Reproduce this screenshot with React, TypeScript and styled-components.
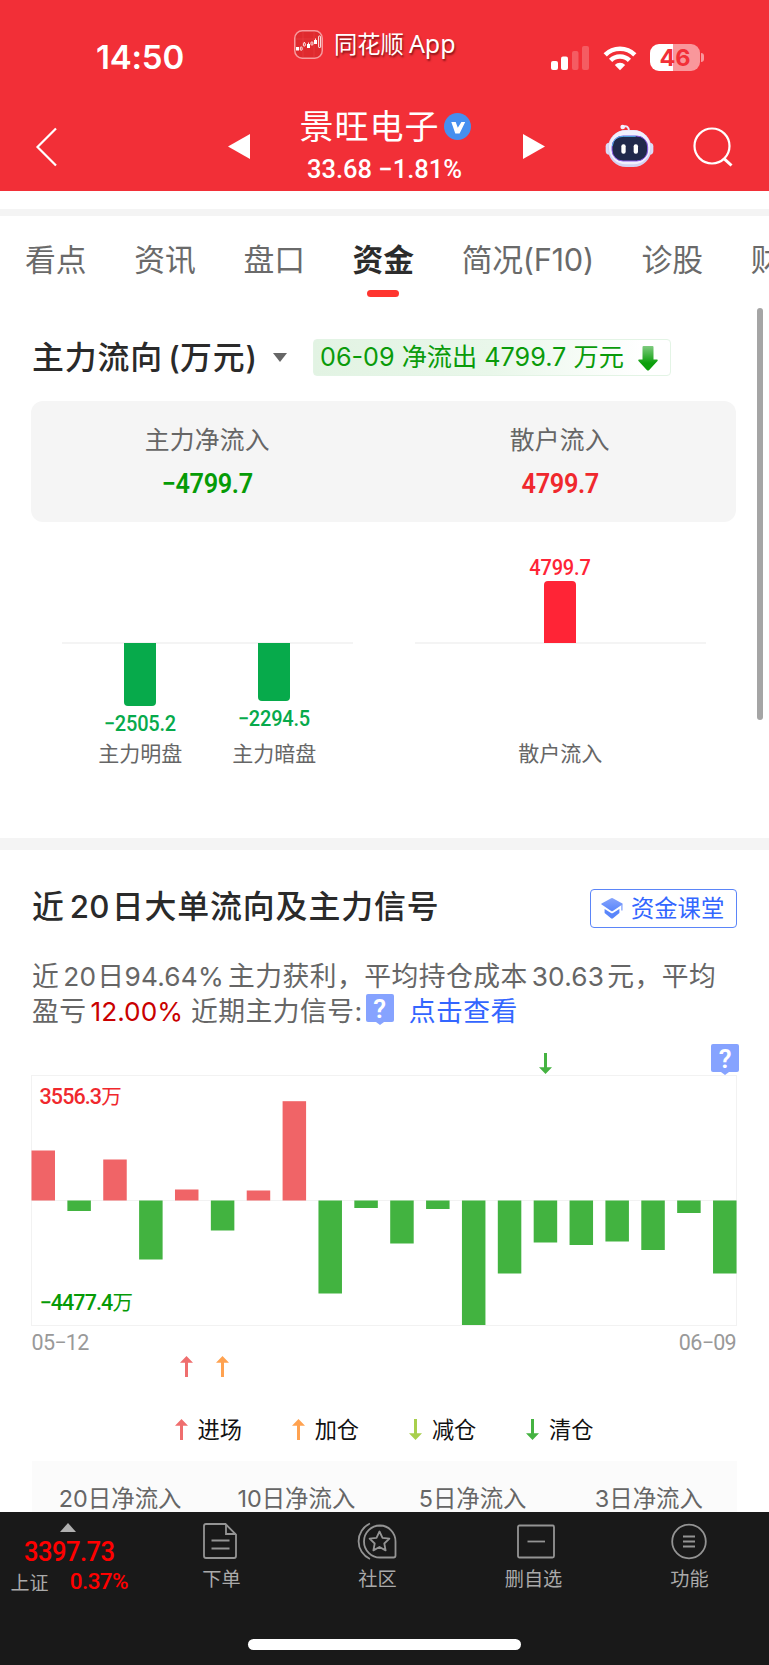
import React, { useState } from "react";
import styled, { createGlobalStyle } from "styled-components";

const sans = `Inter, "Noto Sans CJK SC", sans-serif`;
const din = `Roboto, "Noto Sans CJK SC", sans-serif`;

const GlobalStyle = createGlobalStyle`
  * {
    box-sizing: border-box;
  }
  body {
    margin: 0;
    background: #fff;
    font-family: ${sans};
    color: #333;
  }
  svg {
    display: block;
    flex: none;
  }
`;

const Screen = styled.div`
  position: relative;
  width: 769px;
  height: 1665px;
  display: flex;
  flex-direction: column;
  overflow: hidden;
  white-space: nowrap;
`;

/* ---------- header ---------- */

const Header = styled.header`
  height: 191px;
  flex: none;
  background: #f22f37;
  color: #fff;
`;

const StatusBar = styled.div`
  height: 100px;
  display: grid;
  grid-template-columns: 294px 257px 1fr;
`;

const Clock = styled.div`
  padding: 37px 0 0 96px;
  font-size: 33px;
  line-height: 40px;
  font-weight: 600;
  letter-spacing: -0.2px;
`;

const AppMark = styled.div`
  display: flex;
  align-items: center;
  height: 30px;
  margin-top: 29px;
  font-size: 23.3px;
  line-height: 28px;
  font-family: "Noto Sans", "Noto Sans CJK SC", sans-serif;
  text-shadow: 1px 2px 2px rgba(60, 0, 0, 0.6);

  svg {
    margin-right: 11px;
  }
  span {
    margin-left: 5px;
    font-size: 25px;
  }
`;

const AppName = styled.div`
  height: 30px;
`;

const StatusIcons = styled.div`
  display: flex;
  align-items: center;
  height: 27px;
  margin-top: 44px;
`;

const Battery = styled.div`
  width: 50px;
  height: 27px;
  margin-left: 13px;
  border-radius: 9px;
  background: linear-gradient(to right, #fff 23px, #f9979b 23px);
  color: #f22f37;
  font-size: 23.5px;
  font-weight: 700;
  line-height: 27px;
  text-align: center;
`;

const BatteryCap = styled.div`
  width: 3px;
  height: 9px;
  margin-left: 1px;
  border-radius: 0 5px 5px 0;
  background: #f9979b;
`;

const NavBar = styled.div`
  height: 91px;
  display: flex;
`;

const NavSlot = styled.div<{ left: number; top: number }>`
  margin-left: ${p => p.left}px;
  margin-top: ${p => p.top}px;
`;

const Stock = styled.div`
  width: 273px;
  display: flex;
  flex-direction: column;
  align-items: center;
`;

const StockName = styled.div`
  display: flex;
  align-items: center;
  height: 40px;
  margin-top: 7px;
  padding-right: 3px;
  font-size: 34px;
  line-height: 40px;
  letter-spacing: 1px;

  svg {
    margin: 0 0 1px 4px;
  }
`;

const StockPrice = styled.div`
  height: 30px;
  margin-top: 7px;
  padding-right: 4px;
  font-family: ${din};
  font-weight: 500;
  font-size: 25.5px;
  line-height: 30px;
`;

/* ---------- content ---------- */

const Content = styled.main`
  height: 1321px;
  flex: none;
  padding-top: 18px;
  overflow: hidden;
`;

const Divider = styled.div<{ size: number }>`
  height: ${p => p.size}px;
  background: #f4f4f4;
`;

const Tabs = styled.nav`
  display: flex;
  gap: 47.6px;
  height: 81px;
  padding: 26px 0 0 25px;
  overflow: hidden;
`;

const Tab = styled.div<{ active?: boolean; tight?: boolean }>`
  flex: none;
  display: flex;
  flex-direction: column;
  align-items: center;
  font-size: 30.8px;
  line-height: 36px;
  letter-spacing: ${p => (p.tight ? "-0.3px" : "0")};
  color: ${p => (p.active ? "#2c2c2c" : "#6a6a6a")};
  font-weight: ${p => (p.active ? 700 : 400)};

  &::after {
    content: "";
    width: 32px;
    height: 7px;
    margin-top: 12px;
    border-radius: 3.5px;
    background: ${p => (p.active ? "#ff352f" : "transparent")};
  }
`;

const FlowHead = styled.div`
  display: grid;
  grid-template-columns: 241px 40px 358px;
  align-items: center;
  height: 37px;
  margin: 42px 0 0 32px;
`;

const Title = styled.h2`
  margin: 0;
  font-size: 31.9px;
  line-height: 36px;
  font-weight: 500;
  letter-spacing: 0.9px;
  color: #2a2a2a;
`;

const Caret = styled.div`
  width: 0;
  border: solid transparent;
  border-width: 9px 7.5px 0;
  border-top-color: #666;
`;

const FlowTag = styled.div`
  display: flex;
  justify-content: space-between;
  height: 37px;
  padding: 0 12px 0 6px;
  border: 1px solid #e3f4e5;
  border-radius: 4px;
  background: linear-gradient(to right, #e2f3e3, #e9f7ea 50%, #fff 92%);
  color: #0a9b0a;
  font-size: 25.2px;
  line-height: 35px;

  svg {
    margin-top: 6px;
  }
`;

const Summary = styled.div`
  display: grid;
  grid-template-columns: 1fr 1fr;
  height: 121px;
  margin: 25px 33px 0 31px;
  padding-top: 23px;
  border-radius: 12px;
  background: #f5f5f5;
  text-align: center;
`;

const SummaryLabel = styled.div`
  font-size: 24.8px;
  line-height: 32px;
  letter-spacing: 0.2px;
  color: #666;
`;

const SummaryValue = styled.div<{ up: boolean }>`
  margin-top: 12px;
  font-family: ${din};
  font-size: 27.5px;
  line-height: 32px;
  font-weight: 600;
  letter-spacing: -0.4px;
  transform: scaleX(0.92);
  color: ${p => (p.up ? "#f0282d" : "#069b06")};
`;

const FlowChart = styled.div`
  display: flex;
  gap: 62.5px;
  height: 316px;
  padding-left: 62px;
`;

const FlowGroup = styled.div`
  display: flex;
  justify-content: center;
  width: 290.5px;
  background: linear-gradient(#f4f4f4, #f4f4f4) 0 120px / 100% 2px no-repeat;
`;

const FlowColumn = styled.div`
  width: 134px;
`;

const FlowHalf = styled.div<{ size: number; up?: boolean }>`
  height: ${p => p.size}px;
  display: flex;
  flex-direction: column;
  align-items: center;
  justify-content: ${p => (p.up ? "flex-end" : "flex-start")};
`;

const FlowBar = styled.div<{ up?: boolean }>`
  width: 32px;
  border-radius: ${p => (p.up ? "4px 4px 0 0" : "0 0 4px 4px")};
  background: ${p => (p.up ? "#ff2436" : "#07aa4b")};
`;

const FlowValue = styled.div<{ up?: boolean }>`
  font-family: ${din};
  font-size: 21.5px;
  line-height: 24px;
  font-weight: 500;
  letter-spacing: -0.2px;
  transform: scaleX(0.93);
  margin: ${p => (p.up ? "0 0 1px" : "6px 0 0")};
  color: ${p => (p.up ? "#ff2436" : "#07aa4b")};
`;

const FlowLabel = styled.div`
  font-size: 21px;
  line-height: 22px;
  text-align: center;
  color: #666;
`;

const SectionHead = styled.div`
  display: flex;
  justify-content: space-between;
  height: 39px;
  margin: 39px 32px 0;
`;

const ClassButton = styled.button`
  display: flex;
  width: 147px;
  height: 39px;
  padding: 0 0 0 10px;
  border: 1.5px solid #5b85f8;
  border-radius: 4px;
  background: #fff;
  color: #3366ff;
  font-family: ${sans};
  font-size: 23.3px;
  line-height: 37px;

  svg {
    margin: 8px 8px 0 0;
  }
`;

const Brief = styled.div`
  margin: 31px 0 0 32px;
  color: #666;
`;

const BriefLine = styled.div`
  display: flex;
  height: 35px;
  font-size: 26.8px;
  line-height: 35px;
  letter-spacing: 0.45px;
`;

const Num = styled.span<{ before?: number; after?: number; tone?: string }>`
  margin-left: ${p => p.before || 0}px;
  margin-right: ${p => p.after || 0}px;
  font-size: 0.98em;
  letter-spacing: ${p => (p.tone ? "0" : "0.2px")};
  color: ${p => p.tone || "inherit"};
`;

const Link = styled.a`
  margin-left: 15px;
  color: #3366ff;
`;

const MarkRow = styled.div<{ size: number; top: number; end?: boolean }>`
  display: grid;
  grid-template-columns: repeat(20, 1fr);
  justify-items: center;
  align-items: ${p => (p.end ? "end" : "start")};
  height: ${p => p.size}px;
  margin: ${p => p.top}px 26px 0 25px;
`;

const Mark = styled.div<{ day: number; top?: boolean }>`
  grid-column: ${p => p.day};
  align-self: ${p => (p.top ? "start" : "auto")};
`;

const Plot = styled.div`
  position: relative;
  width: 706px;
  height: 251px;
  margin: 1px 0 0 31px;
`;

const PlotLabel = styled.div<{ up?: boolean }>`
  position: absolute;
  left: 8.5px;
  ${p => (p.up ? "top: 10px" : "bottom: 11px")};
  font-family: ${din};
  font-size: 21.5px;
  line-height: 24px;
  font-weight: 500;
  letter-spacing: -0.9px;
  color: ${p => (p.up ? "#f0282d" : "#069b06")};

  span {
    font-weight: 400;
    font-size: 20.5px;
  }
`;

const Dates = styled.div`
  display: flex;
  justify-content: space-between;
  margin: 4px 33px 0 31.5px;
  font-family: ${din};
  font-size: 21.5px;
  line-height: 25px;
  letter-spacing: -0.7px;
  color: #999;
`;

const Legend = styled.div`
  display: grid;
  grid-template-columns: repeat(4, 117.2px);
  height: 21px;
  margin: 42px 0 0 174.5px;
`;

const LegendItem = styled.div`
  display: flex;
  align-items: center;
  gap: 10px;
  font-size: 22.2px;
  line-height: 21px;
  color: #111;
`;

const Periods = styled.div`
  display: grid;
  grid-template-columns: repeat(4, 1fr);
  height: 51px;
  margin: 21px 32px 0;
  padding-top: 22px;
  background: #fbfbfb;
  color: #666;
  font-size: 23.4px;
  line-height: 32px;
  text-align: center;
`;

const ScrollThumb = styled.div`
  position: absolute;
  top: 308px;
  right: 6px;
  width: 6px;
  height: 412px;
  border-radius: 3px;
  background: #a5a5a5;
`;

/* ---------- bottom bar ---------- */

const Footer = styled.footer`
  height: 153px;
  flex: none;
  display: flex;
  flex-direction: column;
  align-items: center;
  background: #191919;
  color: #aaa;
`;

const Actions = styled.div`
  display: flex;
  width: 100%;
  height: 127px;
`;

const Market = styled.div`
  width: 143.5px;
  padding-top: 11px;
  font-family: ${din};
  font-weight: 500;
  color: #ff0000;
`;

const MarketCaret = styled.div`
  width: 0;
  margin-left: 60px;
  border: solid transparent;
  border-width: 0 8.5px 9px;
  border-bottom-color: #b0b0b0;
`;

const MarketIndex = styled.div`
  margin: 4px 0 0 24px;
  font-size: 27.5px;
  line-height: 32px;
  letter-spacing: -0.6px;
  transform: scaleX(0.93);
  transform-origin: left;
`;

const MarketRow = styled.div`
  display: flex;
  justify-content: space-between;
  margin: 0 15.5px 0 10.5px;
  font-size: 22.5px;
  line-height: 26px;
  letter-spacing: -0.6px;

  span {
    color: #aaa;
    font-size: 19px;
    font-weight: 400;
    line-height: 31px;
    letter-spacing: 0;
  }
`;

const Action = styled.div<{ nudge: number }>`
  width: 156px;
  display: flex;
  flex-direction: column;
  align-items: center;
  padding-top: 10px;
  font-size: 19.2px;
  line-height: 24px;

  svg {
    margin-bottom: 7px;
    margin-left: ${p => p.nudge}px;
  }
`;

const HomeIndicator = styled.div`
  width: 273px;
  height: 11px;
  border-radius: 6px;
  background: #fff;
`;

/* ---------- icons ---------- */

const AppIcon = () => (
  <svg width="29" height="29" viewBox="0 0 29 29">
    <rect x="0.75" y="0.75" width="27.5" height="27.5" rx="7.5" fill="#df2a2e" stroke="#f79a9d" strokeWidth="1.5" />
    <path d="M2 9h25M9 2v25M20 2v25" stroke="#ea4448" strokeWidth="0.5" />
    <g fill="#fff">
      <rect x="2" y="17" width="3" height="3.5" />
      <rect x="13" y="14" width="3" height="4" />
      <rect x="20" y="10" width="3" height="4" />
    </g>
    <g fill="none" stroke="#fff" strokeWidth="0.9">
      <rect x="6.3" y="17" width="1.8" height="3.2" rx="0.6" />
      <path d="M10.3 12v1M14.5 12.5v1.5M21.5 8.5v1.5" />
      <rect x="9.4" y="13" width="1.9" height="3" rx="0.6" />
      <rect x="17" y="12" width="1.9" height="3" rx="0.6" />
      <rect x="24.6" y="6" width="2" height="11.5" rx="0.6" />
    </g>
  </svg>
);

const Signal = () => (
  <svg width="38" height="24" viewBox="0 0 38 24" fill="#fff">
    <rect x="0" y="15" width="7" height="9" rx="2" />
    <rect x="10" y="10.5" width="7" height="13.5" rx="2" />
    <rect x="21" y="5" width="6.5" height="19" rx="2" opacity="0.22" />
    <rect x="31" y="0" width="7" height="24" rx="2" opacity="0.22" />
  </svg>
);

const WifiIcon = styled.svg`
  margin-left: 14px;
`;

const Wifi = () => (
  <WifiIcon width="34" height="26" viewBox="0 0 34 26">
    <g fill="none" stroke="#fff" strokeWidth="4.6">
      <path d="M2.2 9.8a21 21 0 0 1 29.6 0" />
      <path d="M7.6 15.4a13.3 13.3 0 0 1 18.8 0" />
    </g>
    <path d="M17 25.2l-5.2-5.3a7.4 7.4 0 0 1 10.4 0z" fill="#fff" />
  </WifiIcon>
);

const Verified = () => (
  <svg width="27" height="27" viewBox="0 0 27 27">
    <circle cx="13.5" cy="13.5" r="13.5" fill="#468fef" />
    <path d="M7.3 9h4.4l2.1 5.7L17.4 9h3.8l-5.6 11.5h-4.3z" fill="#fff" />
  </svg>
);

const Robot = () => (
  <svg width="48.7" height="44" viewBox="194 284 146 132">
    <path d="M248 292c10-4 18 0 18 14" fill="none" stroke="#eceafc" strokeWidth="6" strokeLinecap="round" />
    <circle cx="247" cy="293" r="7" fill="#f4f2ff" />
    <rect x="196" y="340" width="24" height="36" rx="11" fill="#dcdcf6" />
    <rect x="315" y="340" width="24" height="36" rx="11" fill="#dcdcf6" />
    <rect x="203" y="302" width="130" height="111" rx="54" fill="#d3d3f2" />
    <rect x="206" y="303" width="124" height="102" rx="50" fill="#f1f0fd" />
    <rect x="215" y="320" width="107" height="75" rx="33" fill="#20294b" stroke="#8a5be8" strokeWidth="3" />
    <path d="M216 350q3-29 34-29h36" fill="none" stroke="#4fb0e8" strokeWidth="3" />
    <rect x="243" y="345" width="13" height="28" rx="6" fill="#fff" />
    <rect x="280" y="345" width="13" height="28" rx="6" fill="#fff" />
  </svg>
);

const Search = () => (
  <svg width="40" height="40" viewBox="0 0 40 40" fill="none" stroke="#fff" strokeWidth="2.2">
    <circle cx="19" cy="19" r="17.5" />
    <path d="M31.3 31.8L38.5 38.5" strokeWidth="3" />
  </svg>
);

const FallArrow = () => (
  <svg width="20" height="25" viewBox="0 0 20 25">
    <defs>
      <linearGradient id="fall" x1="0" y1="0" x2="0" y2="1">
        <stop offset="0" stopColor="#7fcb7f" />
        <stop offset="0.7" stopColor="#0c9f0c" />
      </linearGradient>
    </defs>
    <path d="M5.5 0h9q1 0 1 1v12.5h3.5q1.2.3.5 1.5l-8.3 9q-1.2 1-2.4 0L.5 15q-.7-1.2.5-1.5h3.5V1q0-1 1-1z" fill="url(#fall)" />
  </svg>
);

const Cap = () => (
  <svg width="22" height="21" viewBox="0 0 22 21">
    <defs>
      <linearGradient id="cap" x1="0" y1="0" x2="0" y2="1">
        <stop offset="0" stopColor="#86a4fc" />
        <stop offset="1" stopColor="#5a86fb" />
      </linearGradient>
    </defs>
    <path d="M10.2.3q.8-.4 1.6 0l9.6 5.3q.7.5 0 1L11.8 13q-.8.5-1.6 0L.6 6.6q-.7-.5 0-1z" fill="url(#cap)" />
    <path d="M3.6 11l6.4 4q1 .6 2 0l6.4-4v3.9l-6.4 5.4q-1 .7-2 0l-6.4-5.4z" fill="#5a86fb" />
    <path d="M20.9 6.5v6" stroke="#7c9dfc" strokeWidth="1.2" />
  </svg>
);

const HelpBadge = styled.div<{ before?: number }>`
  position: relative;
  width: 28px;
  height: 28px;
  margin-left: ${p => p.before || 0}px;
  border-radius: 2px;
  background: #86a3ff;
  color: #fff;
  font-family: ${din};
  font-size: 26px;
  font-weight: 600;
  line-height: 30px;
  letter-spacing: 0;
  text-align: center;

  &::after {
    content: "";
    position: absolute;
    left: 10px;
    top: 28px;
    border: solid transparent;
    border-width: 3px 4px 0;
    border-top-color: #86a3ff;
  }
`;

const tones = {
  enter: "#ef6e6e",
  add: "#ffa250",
  cut: "#a8cf4c",
  clear: "#45b341",
};

type Tone = keyof typeof tones;

const SignalArrow = ({ tone }: { tone: Tone }) => {
  const down = tone === "cut" || tone === "clear";
  return (
    <svg width="13" height="21" viewBox="0 0 13 21" fill={tones[tone]}>
      <path
        d="M6.5 0L13 6.8H8V21H5V6.8H0z"
        transform={down ? "rotate(180 6.5 10.5)" : undefined}
      />
    </svg>
  );
};

const OrderIcon = () => (
  <svg width="36" height="38" viewBox="0 0 36 38" fill="none" stroke="#949494" strokeWidth="1.8">
    <path d="M4 2h19.5L34 12.5V34q0 2-2 2H4q-2 0-2-2V4q0-2 2-2z" />
    <path d="M24 2v10h10M9.5 18.5h18M9.5 26.5h18" />
  </svg>
);

const ClubIcon = () => (
  <svg width="40" height="38" viewBox="0 0 40 38" fill="none" stroke="#949494" strokeWidth="1.8">
    <path d="M23 3.5a16 16 0 0 0 0 32h13.5q2 0 2-2V19.5A15.7 15.7 0 0 0 23 3.5z" />
    <path d="M13 1.5a19.5 19.5 0 0 0 0 35.5" />
    <path d="M22.5 9.5l3 6.3 6.9.9-5.1 4.8 1.3 6.9-6.1-3.4-6.1 3.4 1.3-6.9-5.1-4.8 6.9-.9z" strokeLinejoin="round" />
  </svg>
);

const RemoveIcon = () => (
  <svg width="38" height="38" viewBox="0 0 38 38" fill="none" stroke="#949494" strokeWidth="1.8">
    <rect x="1" y="3.5" width="36" height="32" rx="1.5" />
    <path d="M10.5 19.5h17.5" />
  </svg>
);

const MenuIcon = () => (
  <svg width="38" height="38" viewBox="0 0 38 38" fill="none" stroke="#949494" strokeWidth="1.8">
    <circle cx="19" cy="19.5" r="16.8" />
    <path d="M13 14.5h12M13 19.5h12M13 24.5h12" />
  </svg>
);

/* ---------- data ---------- */

const tabs = ["看点", "资讯", "盘口", "资金", "简况(F10)", "诊股", "财务"];

const flows = [
  [
    { label: "主力明盘", value: "−2505.2", size: 62.5, up: false },
    { label: "主力暗盘", value: "−2294.5", size: 57.5, up: false },
  ],
  [{ label: "散户流入", value: "4799.7", size: 62.5, up: true }],
];

// bar heights in px, positive is inflow
const bars = [
  50, -10.5, 41, -59, 11, -30, 10, 99.3, -93, -7.5, -43, -8.5, -124.5, -73,
  -42, -44.5, -41, -49.5, -12.5, -73,
];
const STEP = 35.87;
const ZERO = 125.5;

const legend: { tone: Tone; text: string }[] = [
  { tone: "enter", text: "进场" },
  { tone: "add", text: "加仓" },
  { tone: "cut", text: "减仓" },
  { tone: "clear", text: "清仓" },
];

const actions = [
  { icon: <OrderIcon />, text: "下单", nudge: -4 },
  { icon: <ClubIcon />, text: "社区", nudge: -1 },
  { icon: <RemoveIcon />, text: "删自选", nudge: 4 },
  { icon: <MenuIcon />, text: "功能", nudge: -1 },
];

const BigOrderPlot = () => (
  <svg width="706" height="251" viewBox="0 0 706 251">
    <rect x="0.5" y="0.5" width="705" height="250" fill="none" stroke="#f2f2f2" />
    <path d={`M0 ${ZERO}h706`} stroke="#f2f2f2" />
    {bars.map((v, i) => (
      <rect
        key={i}
        x={0.5 + i * STEP}
        y={v > 0 ? ZERO - v : ZERO}
        width={23.5}
        height={Math.abs(v)}
        fill={v > 0 ? "#f06467" : "#42b340"}
      />
    ))}
  </svg>
);

const App = () => {
  const [active, setActive] = useState(3);

  return (
    <Screen>
      <GlobalStyle />
      <Header>
        <StatusBar>
          <Clock>14:50</Clock>
          <AppMark>
            <AppIcon />
            <AppName>
              同花顺<span>App</span>
            </AppName>
          </AppMark>
          <StatusIcons>
            <Signal />
            <Wifi />
            <Battery>46</Battery>
            <BatteryCap />
          </StatusIcons>
        </StatusBar>
        <NavBar>
          <NavSlot left={35} top={27}>
            <svg width="23" height="40" viewBox="0 0 23 40" fill="none" stroke="#fff" strokeWidth="2.2">
              <path d="M21 1.5L2.5 20 21 38.5" />
            </svg>
          </NavSlot>
          <NavSlot left={170} top={34}>
            <svg width="22" height="25" viewBox="0 0 22 25" fill="#fff">
              <path d="M22 0v25L0 12.5z" />
            </svg>
          </NavSlot>
          <Stock>
            <StockName>
              景旺电子
              <Verified />
            </StockName>
            <StockPrice>33.68 −1.81%</StockPrice>
          </Stock>
          <NavSlot left={0} top={34}>
            <svg width="22" height="25" viewBox="0 0 22 25" fill="#fff">
              <path d="M0 0v25l22-12.5z" />
            </svg>
          </NavSlot>
          <NavSlot left={60} top={24}>
            <Robot />
          </NavSlot>
          <NavSlot left={39.5} top={27}>
            <Search />
          </NavSlot>
        </NavBar>
      </Header>

      <Content>
        <Divider size={7} />
        <Tabs>
          {tabs.map((t, i) => (
            <Tab
              key={t}
              active={i === active}
              tight={t.length > 2}
              onClick={() => setActive(i)}
            >
              {t}
            </Tab>
          ))}
        </Tabs>

        <FlowHead>
          <Title>
            主力流向<Num before={5}>(</Num>万元<Num>)</Num>
          </Title>
          <Caret />
          <FlowTag>
            06-09 净流出 4799.7 万元
            <FallArrow />
          </FlowTag>
        </FlowHead>

        <Summary>
          <div>
            <SummaryLabel>主力净流入</SummaryLabel>
            <SummaryValue up={false}>−4799.7</SummaryValue>
          </div>
          <div>
            <SummaryLabel>散户流入</SummaryLabel>
            <SummaryValue up>4799.7</SummaryValue>
          </div>
        </Summary>

        <FlowChart>
          {flows.map((group, g) => (
            <FlowGroup key={g}>
              {group.map(f => (
                <FlowColumn key={f.label}>
                  <FlowHalf size={121} up>
                    {f.up && <FlowValue up>{f.value}</FlowValue>}
                    {f.up && <FlowBar up style={{ height: f.size }} />}
                  </FlowHalf>
                  <FlowHalf size={100}>
                    {!f.up && <FlowBar style={{ height: f.size }} />}
                    {!f.up && <FlowValue>{f.value}</FlowValue>}
                  </FlowHalf>
                  <FlowLabel>{f.label}</FlowLabel>
                </FlowColumn>
              ))}
            </FlowGroup>
          ))}
        </FlowChart>

        <Divider size={12} />

        <SectionHead>
          <Title>
            近<Num before={5} after={2}>20</Num>日大单流向及主力信号
          </Title>
          <ClassButton>
            <Cap />
            资金课堂
          </ClassButton>
        </SectionHead>

        <Brief>
          <BriefLine>
            近<Num before={4} after={1}>20</Num>日<Num after={4}>94.64%</Num>
            主力获利，平均持仓成本<Num before={4} after={3}>30.63</Num>元，平均
          </BriefLine>
          <BriefLine>
            盈亏
            <Num before={4} after={8} tone="#c90000">
              12.00%
            </Num>
            近期主力信号:
            <HelpBadge before={3}>?</HelpBadge>
            <Link>点击查看</Link>
          </BriefLine>
        </Brief>

        <MarkRow size={30} top={15} end>
          <Mark day={15}>
            <SignalArrow tone="clear" />
          </Mark>
          <Mark day={20} top>
            <HelpBadge>?</HelpBadge>
          </Mark>
        </MarkRow>
        <Plot>
          <BigOrderPlot />
          <PlotLabel up>
            3556.3<span>万</span>
          </PlotLabel>
          <PlotLabel>
            −4477.4<span>万</span>
          </PlotLabel>
        </Plot>
        <Dates>
          <div>05−12</div>
          <div>06−09</div>
        </Dates>
        <MarkRow size={21} top={1}>
          <Mark day={5}>
            <SignalArrow tone="enter" />
          </Mark>
          <Mark day={6}>
            <SignalArrow tone="add" />
          </Mark>
        </MarkRow>

        <Legend>
          {legend.map(l => (
            <LegendItem key={l.tone}>
              <SignalArrow tone={l.tone} />
              {l.text}
            </LegendItem>
          ))}
        </Legend>

        <Periods>
          <div>20日净流入</div>
          <div>10日净流入</div>
          <div>5日净流入</div>
          <div>3日净流入</div>
        </Periods>
      </Content>
      <ScrollThumb />

      <Footer>
        <Actions>
          <Market>
            <MarketCaret />
            <MarketIndex>3397.73</MarketIndex>
            <MarketRow>
              <span>上证</span>
              0.37%
            </MarketRow>
          </Market>
          {actions.map(a => (
            <Action key={a.text} nudge={a.nudge}>
              {a.icon}
              {a.text}
            </Action>
          ))}
        </Actions>
        <HomeIndicator />
      </Footer>
    </Screen>
  );
};

export default App;
